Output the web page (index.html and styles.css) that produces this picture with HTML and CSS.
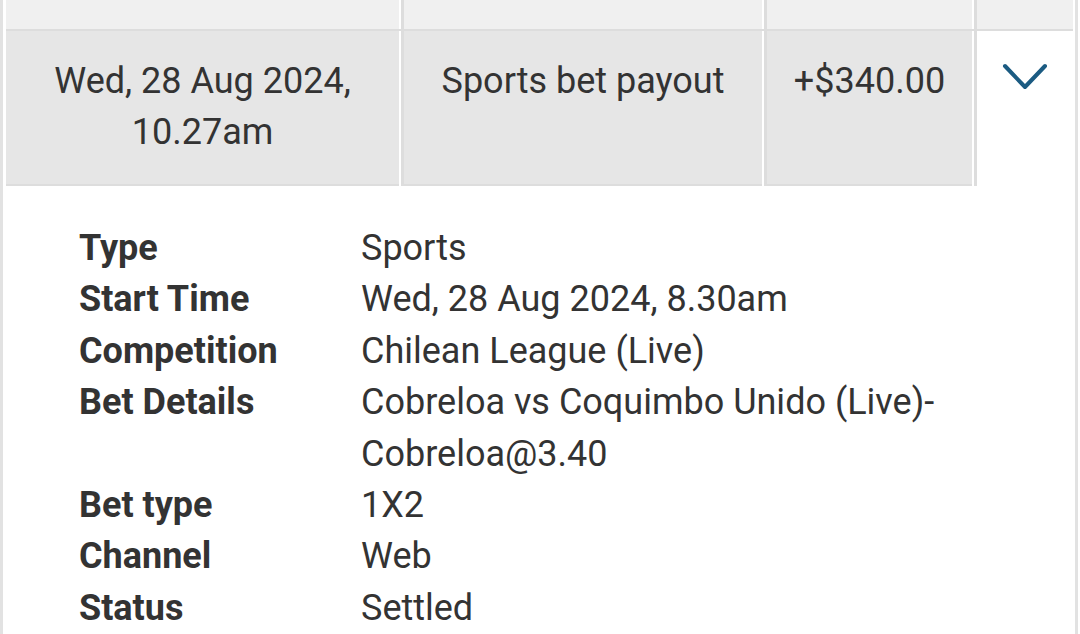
FILE: index.html
```html
<!DOCTYPE html>
<html lang="en">
<head>
    <meta charset="UTF-8">
    <meta name="viewport" content="width=device-width, initial-scale=1.0">
    <title>Transaction history</title>
    <link rel="stylesheet" href="styles.css">
</head>
<body>
    <div class="history">
        <div class="tx-row tx-row--prev">
            <div class="cell"></div>
            <div class="cell"></div>
            <div class="cell"></div>
            <div class="cell"></div>
        </div>

        <div class="tx-row tx-row--open">
            <div class="cell">Wed, 28 Aug 2024, 10.27am</div>
            <div class="cell">Sports bet payout</div>
            <div class="cell">+$340.00</div>
            <div class="cell cell--toggle">
                <svg class="chevron" viewBox="0 0 46 30" fill="none" stroke="currentColor" stroke-width="4" stroke-linecap="round" stroke-linejoin="round">
                    <path d="M3 4L23 25L43 4" />
                </svg>
            </div>
        </div>

        <div class="tx-details">
            <dl class="detail-list">
                <dt>Type</dt>
                <dd>Sports</dd>
                <dt>Start Time</dt>
                <dd>Wed, 28 Aug 2024, 8.30am</dd>
                <dt>Competition</dt>
                <dd>Chilean League (Live)</dd>
                <dt>Bet Details</dt>
                <dd>Cobreloa vs Coquimbo Unido (Live)-Cobreloa@3.40</dd>
                <dt>Bet type</dt>
                <dd>1X2</dd>
                <dt>Channel</dt>
                <dd>Web</dd>
                <dt>Status</dt>
                <dd>Settled</dd>
            </dl>
        </div>
    </div>
</body>
</html>
```

FILE: styles.css
```css
:root {
    --background: #ffffff;
    --text: #333333;
    --row-prev: #f0f0f0;
    --row-open: #e6e6e6;
    --border: #dddddd;
    --outer-border: #e2e2e2;
    --accent: #1b5b82;
}

html, body {
    margin: 0;
    padding: 0;
    background-color: var(--background);
    color: var(--text);
    font-family: Roboto, "Noto Sans", Arial, sans-serif;
    font-size: 36px;
    line-height: 51px;
    overflow: hidden;
}

.history {
    width: 1067px;
    border-left: 3px solid var(--outer-border);
    border-right: 3px solid var(--outer-border);
    padding: 0 2px 0 3px;
    min-height: 634px;
}

.tx-row {
    display: grid;
    grid-template-columns: 393px 361px 208px 1fr;
    column-gap: 2px;
}

.tx-row .cell + .cell {
    border-left: 3px solid var(--border);
}

.tx-row--prev {
    height: 29px;
}

.tx-row--prev .cell {
    background-color: var(--row-prev);
}

.tx-row--open {
    border-top: 2px solid var(--border);
}

.tx-row--open .cell {
    background-color: var(--row-open);
    text-align: center;
    padding: 25px 18px 26px;
    border-bottom: 2px solid var(--border);
}

.tx-row--open .cell--toggle {
    background-color: var(--background);
    border-bottom: none;
    padding: 0;
    color: var(--accent);
}

.chevron {
    display: block;
    width: 46px;
    height: 30px;
    margin: 31px auto 0;
}

.tx-details {
    padding: 37px 60px 0 73px;
}

.detail-list {
    display: grid;
    grid-template-columns: 282px 1fr;
    margin: 0;
    line-height: 51.4px;
}

.detail-list dt {
    font-weight: bold;
}

.detail-list dd {
    margin: 0;
    max-width: 600px;
}
```
